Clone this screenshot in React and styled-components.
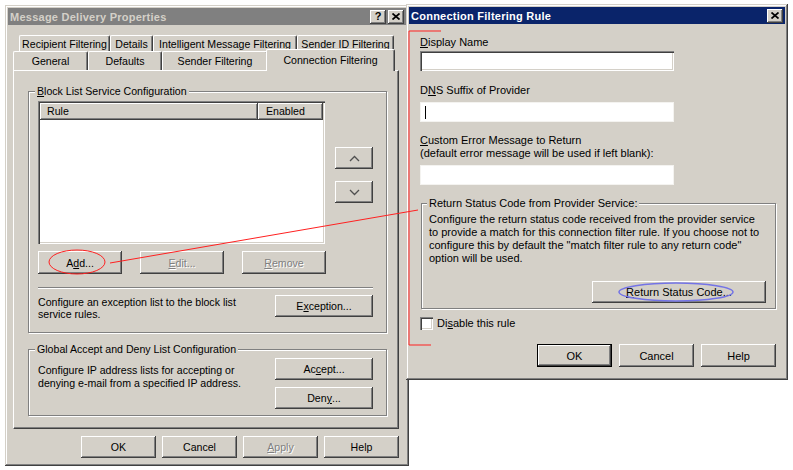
import React from 'react';
import styled, { createGlobalStyle, css } from 'styled-components';

const face = '#d4d0c8';
const raised = `inset -1px -1px #404040, inset 1px 1px #fff, inset -2px -2px #808080, inset 2px 2px ${face}`;
const sunken = `inset 1px 1px #808080, inset 2px 2px #404040, inset -1px -1px #fff, inset -2px -2px ${face}`;

const GlobalStyle = createGlobalStyle`
  body {
    margin: 0;
    background: #fff;
    font-family: "Liberation Sans", Arial, sans-serif;
    font-size: 11px;
    color: #000;
  }
`;

const Desktop = styled.div`
  position: relative;
  width: 793px;
  height: 470px;
  overflow: hidden;
  background: #fff;
`;

// windows sit on a free desktop, so they are placed by coordinates
const Window = styled.div`
  position: absolute;
  left: ${p => p.$x}px;
  top: ${p => p.$y}px;
  width: ${p => p.$w}px;
  height: ${p => p.$h}px;
  box-sizing: border-box;
  padding: 3px;
  background: ${face};
  box-shadow: inset -1px -1px #404040, inset 1px 1px ${face}, inset -2px -2px #808080, inset 2px 2px #fff;
  display: flex;
  flex-direction: column;
`;

const TitleBar = styled.div`
  height: 17px;
  flex: none;
  display: flex;
  align-items: center;
  justify-content: space-between;
  padding: 0 2px 0 2px;
  background: ${p => (p.$active ? '#0a246a' : '#808080')};
  color: ${p => (p.$active ? '#fff' : face)};
  font-weight: bold;
  font-size: 11px;
  letter-spacing: 0.25px;
  white-space: nowrap;
`;

const TitleButtons = styled.div`
  display: flex;
  gap: 2px;
`;

const TitleButton = styled.div`
  width: 16px;
  height: 14px;
  box-sizing: border-box;
  background: ${face};
  box-shadow: ${raised};
  color: #000;
  display: flex;
  align-items: center;
  justify-content: center;
  font-size: 11px;
  font-weight: bold;
  letter-spacing: 0;
  padding-bottom: 1px;
`;

const Button = styled.button`
  box-sizing: border-box;
  flex: none;
  width: ${p => p.$w || 75}px;
  height: ${p => p.$h || 23}px;
  padding: 0;
  margin: 0;
  border: none;
  background: ${face};
  font: inherit;
  color: ${p => (p.$off ? '#808080' : '#000')};
  text-shadow: ${p => (p.$off ? '1px 1px #fff' : 'none')};
  box-shadow: ${raised};
  display: flex;
  align-items: center;
  justify-content: center;
  ${p =>
    p.$default &&
    css`
      box-shadow: inset 0 0 0 1px #000, inset -2px -2px #404040, inset 2px 2px #fff, inset -3px -3px #808080;
    `}
`;

/* ---------- left dialog ---------- */

const LeftBody = styled.div`
  display: flex;
  flex-direction: column;
  padding: 10px 7px 0 5px;
  font-size: 10.6px;
`;

const TabRow = styled.div`
  display: flex;
  height: ${p => p.$h}px;
  padding-left: ${p => p.$indent || 0}px;
  align-items: flex-end;
`;

const Tab = styled.div`
  box-sizing: border-box;
  width: ${p => p.$w}px;
  height: ${p => p.$h}px;
  flex: none;
  display: flex;
  align-items: center;
  justify-content: center;
  white-space: nowrap;
  background: ${face};
  border-top: 1px solid #fff;
  border-left: 1px solid #fff;
  border-right: 1px solid #404040;
  border-radius: 2px 2px 0 0;
  box-shadow: inset -1px 0 #808080;
  ${p =>
    p.$selected &&
    css`
      position: relative;
      z-index: 1;
      margin: 0 -2px -1px -2px;
      padding-bottom: 2px;
    `}
`;

const Panel = styled.div`
  box-sizing: border-box;
  height: 359px;
  padding: 20px 11px 0 14px;
  border-top: 1px solid #fff;
  border-left: 1px solid #fff;
  border-right: 1px solid #404040;
  border-bottom: 1px solid #404040;
  box-shadow: inset -1px -1px #808080;
  display: flex;
  flex-direction: column;
`;

const Group = styled.div`
  display: flex;
  flex-direction: column;
  border: 1px solid #808080;
  box-shadow: inset 1px 1px #fff, 1px 1px #fff;
  margin-top: ${p => p.$mt || 0}px;
  margin-left: ${p => p.$ml || 0}px;
  padding: ${p => p.$pad};
`;

const Legend = styled.div`
  align-self: flex-start;
  margin: -7px 0 0 ${p => p.$ml}px;
  padding: 0 2px;
  line-height: 13px;
  background: ${face};
  white-space: nowrap;
`;

const ListRow = styled.div`
  display: flex;
  gap: 10px;
  margin-top: 3px;
`;

const ListView = styled.div`
  width: 287px;
  height: 143px;
  box-sizing: border-box;
  padding: 2px;
  background: #fff;
  box-shadow: ${sunken};
`;

const ListHeader = styled.div`
  display: flex;
  height: 17px;
`;

const HeaderCell = styled.div`
  box-sizing: border-box;
  width: ${p => p.$w}px;
  padding-left: ${p => p.$pl}px;
  line-height: 17px;
  background: ${face};
  box-shadow: inset -1px -1px #404040, inset 1px 1px #fff, inset -2px -2px #808080;
`;

const SideButtons = styled.div`
  display: flex;
  flex-direction: column;
  gap: 12px;
  margin-top: 46px;
`;

const ButtonRow = styled.div`
  display: flex;
  gap: ${p => p.$gap}px;
  margin-top: ${p => p.$mt}px;
  justify-content: ${p => p.$justify || 'flex-start'};
`;

const Separator = styled.div`
  width: 335px;
  margin-top: 13px;
  border-top: 1px solid #808080;
  border-bottom: 1px solid #fff;
`;

const InfoRow = styled.div`
  display: flex;
  justify-content: space-between;
  align-items: flex-start;
  width: 335px;
  margin-top: ${p => p.$mt}px;
`;

const InfoText = styled.div`
  line-height: ${p => p.$lh || 13}px;
  padding-top: ${p => p.$pt || 0}px;
  white-space: nowrap;
`;

const ButtonColumn = styled.div`
  display: flex;
  flex-direction: column;
  gap: 7px;
`;

/* ---------- right dialog ---------- */

const RightBody = styled.div`
  display: flex;
  flex-direction: column;
  padding: 0 9px 0 11px;
`;

const Label = styled.div`
  line-height: 13px;
  margin-top: ${p => p.$mt}px;
  white-space: nowrap;
`;

const TextBox = styled.div`
  box-sizing: border-box;
  width: 254px;
  height: 20px;
  margin-top: ${p => p.$mt}px;
  background: #fff;
  box-shadow: ${p => (p.$sunken ? sunken : `inset 0 0 0 1px #f4f3f0`)};
  display: flex;
  align-items: center;
  padding-left: 5px;
`;

const Caret = styled.span`
  width: 1px;
  height: 13px;
  background: #000;
`;

const Paragraph = styled.div`
  line-height: 13px;
  margin-top: 3px;
  white-space: nowrap;
`;

const CheckRow = styled.label`
  display: flex;
  align-items: center;
  gap: 4px;
  margin-top: 8px;
  line-height: 13px;
`;

const CheckBox = styled.span`
  width: 13px;
  height: 13px;
  box-sizing: border-box;
  background: #fff;
  box-shadow: ${sunken};
`;

/* ---------- annotation ---------- */

const Overlay = styled.svg`
  position: absolute;
  left: 0;
  top: 0;
  pointer-events: none;
  z-index: 5;
`;

const CloseGlyph = () => (
  <svg width="8" height="7" viewBox="0 0 8 7">
    <path d="M0.5 0.5 L7.5 6.5 M7.5 0.5 L0.5 6.5" stroke="#000" strokeWidth="1.7" />
  </svg>
);

const Chevron = ({ up }) => (
  <svg width="11" height="7" viewBox="0 0 11 7">
    <polyline
      points={up ? '1,6 5.5,1.5 10,6' : '1,1 5.5,5.5 10,1'}
      fill="none"
      stroke="#505050"
      strokeWidth="1.3"
    />
  </svg>
);

const backTabs = [
  ['Recipient Filtering', 91],
  ['Details', 43],
  ['Intelligent Message Filtering', 144],
  ['Sender ID Filtering', 97],
];

const frontTabs = [
  ['General', 75],
  ['Defaults', 74],
  ['Sender Filtering', 106],
];

const App = () => {
  return (
    <Desktop>
      <GlobalStyle />

      <Window $x={5} $y={5} $w={404} $h={461}>
        <TitleBar>
          <span>Message Delivery Properties</span>
          <TitleButtons>
            <TitleButton>?</TitleButton>
            <TitleButton>
              <CloseGlyph />
            </TitleButton>
          </TitleButtons>
        </TitleBar>
        <LeftBody>
          <TabRow $h={16} $indent={6}>
            {backTabs.map(([name, w]) => (
              <Tab key={name} $w={w} $h={16}>
                {name}
              </Tab>
            ))}
          </TabRow>
          <TabRow $h={19}>
            {frontTabs.map(([name, w]) => (
              <Tab key={name} $w={w} $h={19}>
                {name}
              </Tab>
            ))}
            <Tab $w={129} $h={22} $selected>
              Connection Filtering
            </Tab>
          </TabRow>
          <Panel>
            <Group $pad="0 11px 12px 9px">
              <Legend $ml={-3}>
                <u>B</u>lock List Service Configuration
              </Legend>
              <ListRow>
                <ListView>
                  <ListHeader>
                    <HeaderCell $w={218} $pl={7}>Rule</HeaderCell>
                    <HeaderCell $w={65} $pl={8}>Enabled</HeaderCell>
                  </ListHeader>
                </ListView>
                <SideButtons>
                  <Button $w={38} $h={22}>
                    <Chevron up />
                  </Button>
                  <Button $w={38} $h={22}>
                    <Chevron />
                  </Button>
                </SideButtons>
              </ListRow>
              <ButtonRow $gap={18} $mt={7}>
                <Button $w={84}>
                  A<u>d</u>d...
                </Button>
                <Button $w={84} $off>
                  <u>E</u>dit...
                </Button>
                <Button $w={84} $off>
                  <u>R</u>emove
                </Button>
              </ButtonRow>
              <Separator />
              <InfoRow $mt={6}>
                <InfoText $lh={12} $pt={1}>
                  Configure an exception list to the block list
                  <br />
                  service rules.
                </InfoText>
                <Button $w={98} $h={22}>
                  E<u>x</u>ception...
                </Button>
              </InfoRow>
            </Group>

            <Group $mt={16} $pad="0 10px 6px 9px">
              <Legend $ml={-3}>Global Accept and Deny List Configuration</Legend>
              <InfoRow $mt={2}>
                <InfoText $pt={6}>
                  Configure IP address lists for accepting or
                  <br />
                  denying e-mail from a specified IP address.
                </InfoText>
                <ButtonColumn>
                  <Button $w={98} $h={22}>
                    Ac<u>c</u>ept...
                  </Button>
                  <Button $w={98} $h={22}>
                    Den<u>y</u>...
                  </Button>
                </ButtonColumn>
              </InfoRow>
            </Group>
          </Panel>
          <ButtonRow $gap={6} $mt={7} $justify="flex-end">
            <Button $h={22}>OK</Button>
            <Button $h={22}>Cancel</Button>
            <Button $h={22} $off>
              <u>A</u>pply
            </Button>
            <Button $h={22}>Help</Button>
          </ButtonRow>
        </LeftBody>
      </Window>

      <Window $x={406} $y={4} $w={382} $h={376}>
        <TitleBar $active>
          <span>Connection Filtering Rule</span>
          <TitleButton>
            <CloseGlyph />
          </TitleButton>
        </TitleBar>
        <RightBody>
          <Label $mt={12}>
            <u>D</u>isplay Name
          </Label>
          <TextBox $mt={2} $sunken />
          <Label $mt={13}>
            D<u>N</u>S Suffix of Provider
          </Label>
          <TextBox $mt={5}>
            <Caret />
          </TextBox>
          <Label $mt={12}>
            <u>C</u>ustom Error Message to Return
            <br />
            (default error message will be used if left blank):
          </Label>
          <TextBox $mt={5} />

          <Group $mt={18} $ml={1} $pad="0 9px 5px 7px">
            <Legend $ml={-2}>Return Status Code from Provider Service:</Legend>
            <Paragraph>
              Configure the return status code received from the provider service
              <br />
              to provide a match for this connection filter rule. If you choose not to
              <br />
              configure this by default the "match filter rule to any return code"
              <br />
              option will be used.
            </Paragraph>
            <ButtonRow $gap={0} $mt={16} $justify="flex-end">
              <Button $w={174} $h={22}>
                <u>R</u>eturn Status Code...
              </Button>
            </ButtonRow>
          </Group>

          <CheckRow>
            <CheckBox />
            <span>
              Di<u>s</u>able this rule
            </span>
          </CheckRow>

          <ButtonRow $gap={7} $mt={14} $justify="flex-end">
            <Button $default>OK</Button>
            <Button>Cancel</Button>
            <Button>Help</Button>
          </ButtonRow>
        </RightBody>
      </Window>

      <Overlay width="793" height="470" viewBox="0 0 793 470">
        <ellipse cx="77" cy="262" rx="28" ry="12" fill="none" stroke="#ff2020" strokeWidth="1" />
        <line x1="110" y1="263" x2="418" y2="210" stroke="#ff2020" strokeWidth="1" />
        <polyline points="441,31 409,31 409,345 431,345" fill="none" stroke="#ff2020" strokeWidth="1" />
        <ellipse cx="676" cy="292" rx="57" ry="9" fill="none" stroke="#7373e6" strokeWidth="1.5" />
      </Overlay>
    </Desktop>
  );
};

export default App;
